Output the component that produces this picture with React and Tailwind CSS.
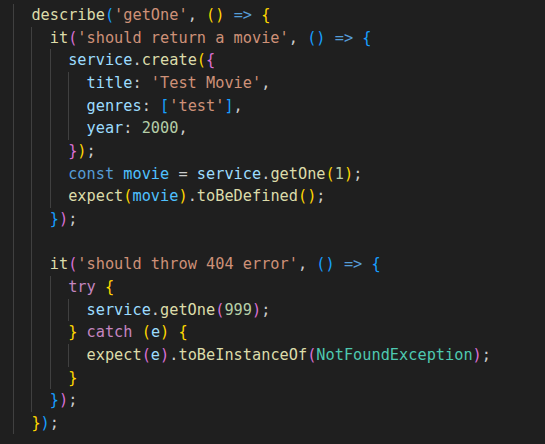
const C = {
  fn: 'text-[#dcdcaa]',
  str: 'text-[#ce9178]',
  prop: 'text-[#9cdcfe]',
  cst: 'text-[#4fc1ff]',
  kw: 'text-[#569cd6]',
  ctl: 'text-[#c586c0]',
  num: 'text-[#b5cea8]',
  cls: 'text-[#4ec9b0]',
  p: 'text-[#cccccc]',
  b1: 'text-[#ffd700]',
  b2: 'text-[#da70d6]',
  b3: 'text-[#179fff]',
}

// [indent level, guide count, tokens]
const LINES = [
  [1, 1, [['describe', 'fn'], ['(', 'b3'], ["'getOne'", 'str'], [', ', 'p'], ['()', 'b1'], [' ', 'p'], ['=>', 'kw'], [' ', 'p'], ['{', 'b1']]],
  [2, 2, [['it', 'fn'], ['(', 'b2'], ["'should return a movie'", 'str'], [', ', 'p'], ['()', 'b3'], [' ', 'p'], ['=>', 'kw'], [' ', 'p'], ['{', 'b3']]],
  [3, 3, [['service', 'prop'], ['.', 'p'], ['create', 'fn'], ['(', 'b1'], ['{', 'b2']]],
  [4, 4, [['title', 'prop'], [': ', 'p'], ["'Test Movie'", 'str'], [',', 'p']]],
  [4, 4, [['genres', 'prop'], [': ', 'p'], ['[', 'b3'], ["'test'", 'str'], [']', 'b3'], [',', 'p']]],
  [4, 4, [['year', 'prop'], [': ', 'p'], ['2000', 'num'], [',', 'p']]],
  [3, 3, [['}', 'b2'], [')', 'b1'], [';', 'p']]],
  [3, 3, [['const', 'kw'], [' ', 'p'], ['movie', 'cst'], [' = ', 'p'], ['service', 'prop'], ['.', 'p'], ['getOne', 'fn'], ['(', 'b1'], ['1', 'num'], [')', 'b1'], [';', 'p']]],
  [3, 3, [['expect', 'fn'], ['(', 'b1'], ['movie', 'cst'], [')', 'b1'], ['.', 'p'], ['toBeDefined', 'fn'], ['()', 'b1'], [';', 'p']]],
  [2, 2, [['}', 'b3'], [')', 'b2'], [';', 'p']]],
  [0, 2, []],
  [2, 2, [['it', 'fn'], ['(', 'b2'], ["'should throw 404 error'", 'str'], [', ', 'p'], ['()', 'b3'], [' ', 'p'], ['=>', 'kw'], [' ', 'p'], ['{', 'b3']]],
  [3, 3, [['try', 'ctl'], [' ', 'p'], ['{', 'b1']]],
  [4, 4, [['service', 'prop'], ['.', 'p'], ['getOne', 'fn'], ['(', 'b2'], ['999', 'num'], [')', 'b2'], [';', 'p']]],
  [3, 3, [['}', 'b1'], [' ', 'p'], ['catch', 'ctl'], [' ', 'p'], ['(', 'b1'], ['e', 'prop'], [')', 'b1'], [' ', 'p'], ['{', 'b1']]],
  [4, 4, [['expect', 'fn'], ['(', 'b2'], ['e', 'prop'], [')', 'b2'], ['.', 'p'], ['toBeInstanceOf', 'fn'], ['(', 'b2'], ['NotFoundException', 'cls'], [')', 'b2'], [';', 'p']]],
  [3, 3, [['}', 'b1']]],
  [2, 2, [['}', 'b3'], [')', 'b2'], [';', 'p']]],
  [1, 1, [['}', 'b1'], [')', 'b3'], [';', 'p']]],
]

export default function App() {
  return (
    <div
      className="w-[545px] h-[444px] overflow-hidden bg-[#1f1f1f] pt-[4px] pl-[13px] text-[15.28px] leading-[22.67px] whitespace-pre"
      style={{ fontFamily: '"DejaVu Sans Mono", monospace' }}
    >
      {LINES.map(([indent, guides, tokens], i) => (
        <div key={i} className="flex h-[22.67px]">
          {Array.from({ length: Math.max(indent, guides) }).map((_, g) => (
            <span
              key={g}
              className={g < guides ? 'w-[2ch] shrink-0 border-l border-[#404040]' : 'w-[2ch] shrink-0'}
            />
          ))}
          <span>
            {tokens.map(([t, k], j) => (
              <span key={j} className={C[k]}>{t}</span>
            ))}
          </span>
        </div>
      ))}
    </div>
  )
}
